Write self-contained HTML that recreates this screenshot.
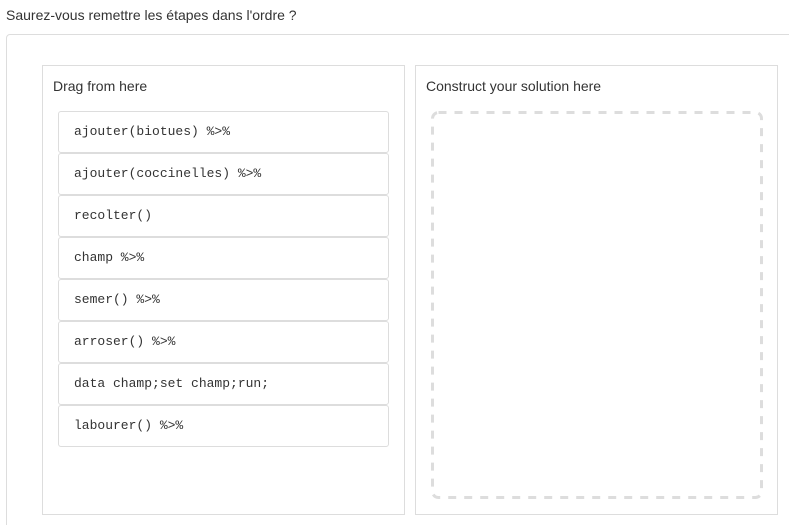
<!DOCTYPE html>
<html style="overflow:hidden;height:525px"><head><style>
body{margin:0;background:#fff;font-family:"Liberation Sans",Arial,sans-serif;color:#333;width:789px;height:525px;overflow:hidden;position:relative}
.q{position:absolute;left:6px;top:7px;font-size:14px}
.outer{position:absolute;left:6px;top:34px;width:800px;height:500px;border:1px solid #ddd;border-radius:4px}
.panel{position:absolute;top:65px;width:361px;height:448px;border:1px solid #ddd}
.h{position:absolute;left:10px;top:12px;font-size:14px}
.item{position:absolute;left:15px;height:40px;border:1px solid #ddd;border-radius:3px;font-family:"Liberation Mono","Courier New",monospace;font-size:13px;line-height:40px;padding-left:15px;width:314px}
svg{position:absolute;left:15px;top:45px}
</style></head><body>
<div class="q">Saurez-vous remettre les étapes dans l'ordre ?</div>
<div class="outer"></div>
<div class="panel" style="left:42px">
<div class="h">Drag from here</div>
<div class="item" style="top:45px">ajouter(biotues) %&gt;%</div>
<div class="item" style="top:87px">ajouter(coccinelles) %&gt;%</div>
<div class="item" style="top:129px">recolter()</div>
<div class="item" style="top:171px">champ %&gt;%</div>
<div class="item" style="top:213px">semer() %&gt;%</div>
<div class="item" style="top:255px">arroser() %&gt;%</div>
<div class="item" style="top:297px">data champ;set champ;run;</div>
<div class="item" style="top:339px">labourer() %&gt;%</div>
</div>
<div class="panel" style="left:415px">
<div class="h">Construct your solution here</div>
<svg width="332" height="388"><rect x="1.5" y="1.5" width="329" height="385" rx="6" fill="none" stroke="#ddd" stroke-width="3" stroke-dasharray="8 8"/></svg>
</div>
</body></html>
